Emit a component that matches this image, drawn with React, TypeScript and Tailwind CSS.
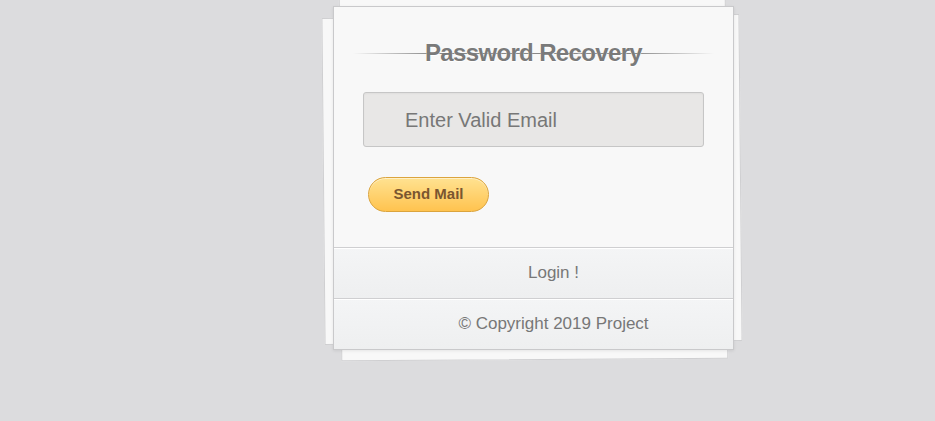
import React from 'react';

export default function App() {
  return (
    <div className="min-h-[421px] w-full bg-[#dcdcde] font-['Liberation_Sans',Arial,sans-serif] overflow-hidden">
      <div className="pl-[333px] pt-[6px]">
        <div className="relative w-[401px]">
          {/* Paper stack behind the card */}
          <div className="absolute left-[7px] top-[-14px] h-[368px] w-[387px] -rotate-[0.4deg] border border-[#cfcfd1] bg-[#f8f8f8]" />
          <div className="absolute left-[-10px] top-[10px] h-[327px] w-[418px] -rotate-[0.55deg] border border-[#cfcfd1] bg-[#f8f8f8]" />

          {/* Card */}
          <div className="relative border border-[#c9c9cb] bg-[#f8f8f8] shadow-[0_1px_3px_rgba(0,0,0,0.08)]">
            <div className="px-[29px] pb-[35px] pt-[31px]">
              <div className="relative flex h-[30px] items-center justify-center">
                <div className="absolute left-[-10px] right-[-10px] top-[15px] h-px bg-[linear-gradient(to_right,rgba(136,136,136,0)_0%,#888_22%,#888_78%,rgba(136,136,136,0)_100%)]" />
                <h1 className="relative text-[24px] font-bold tracking-[-0.65px] text-[#7a7a7a] [text-shadow:0_1px_0_#fff]">
                  Password Recovery
                </h1>
              </div>
              <div className="mt-[24px] flex h-[55px] items-center rounded-[3px] border border-[#c6c6c6] bg-[#e8e7e6] pl-[41px] shadow-[inset_0_1px_2px_rgba(0,0,0,0.04)]">
                <span className="text-[20px] text-[#777]">Enter Valid Email</span>
              </div>
              <div className="mt-[30px] pl-[5px]">
                <button className="flex h-[35px] w-[121px] items-center justify-center rounded-full border border-[#dba43d] bg-[linear-gradient(to_bottom,#ffe291,#ffc34f)] text-[15px] font-bold text-[#7a5630] shadow-[inset_0_1px_0_rgba(255,255,255,0.5)]">
                  Send Mail
                </button>
              </div>
            </div>
            <div className="flex h-[51px] items-center justify-center border-t border-[#cfcfd1] bg-[linear-gradient(to_bottom,#f4f5f6,#eeeff0)] pl-[40px] text-[17px] text-[#777] shadow-[inset_0_1px_0_#fff]">
              Login !
            </div>
            <div className="flex h-[51px] items-center justify-center border-t border-[#cfcfd1] bg-[linear-gradient(to_bottom,#f4f5f6,#eeeff0)] pl-[40px] text-[17px] text-[#777] shadow-[inset_0_1px_0_#fff]">
              © Copyright 2019 Project
            </div>
          </div>
        </div>
      </div>
    </div>
  );
}
